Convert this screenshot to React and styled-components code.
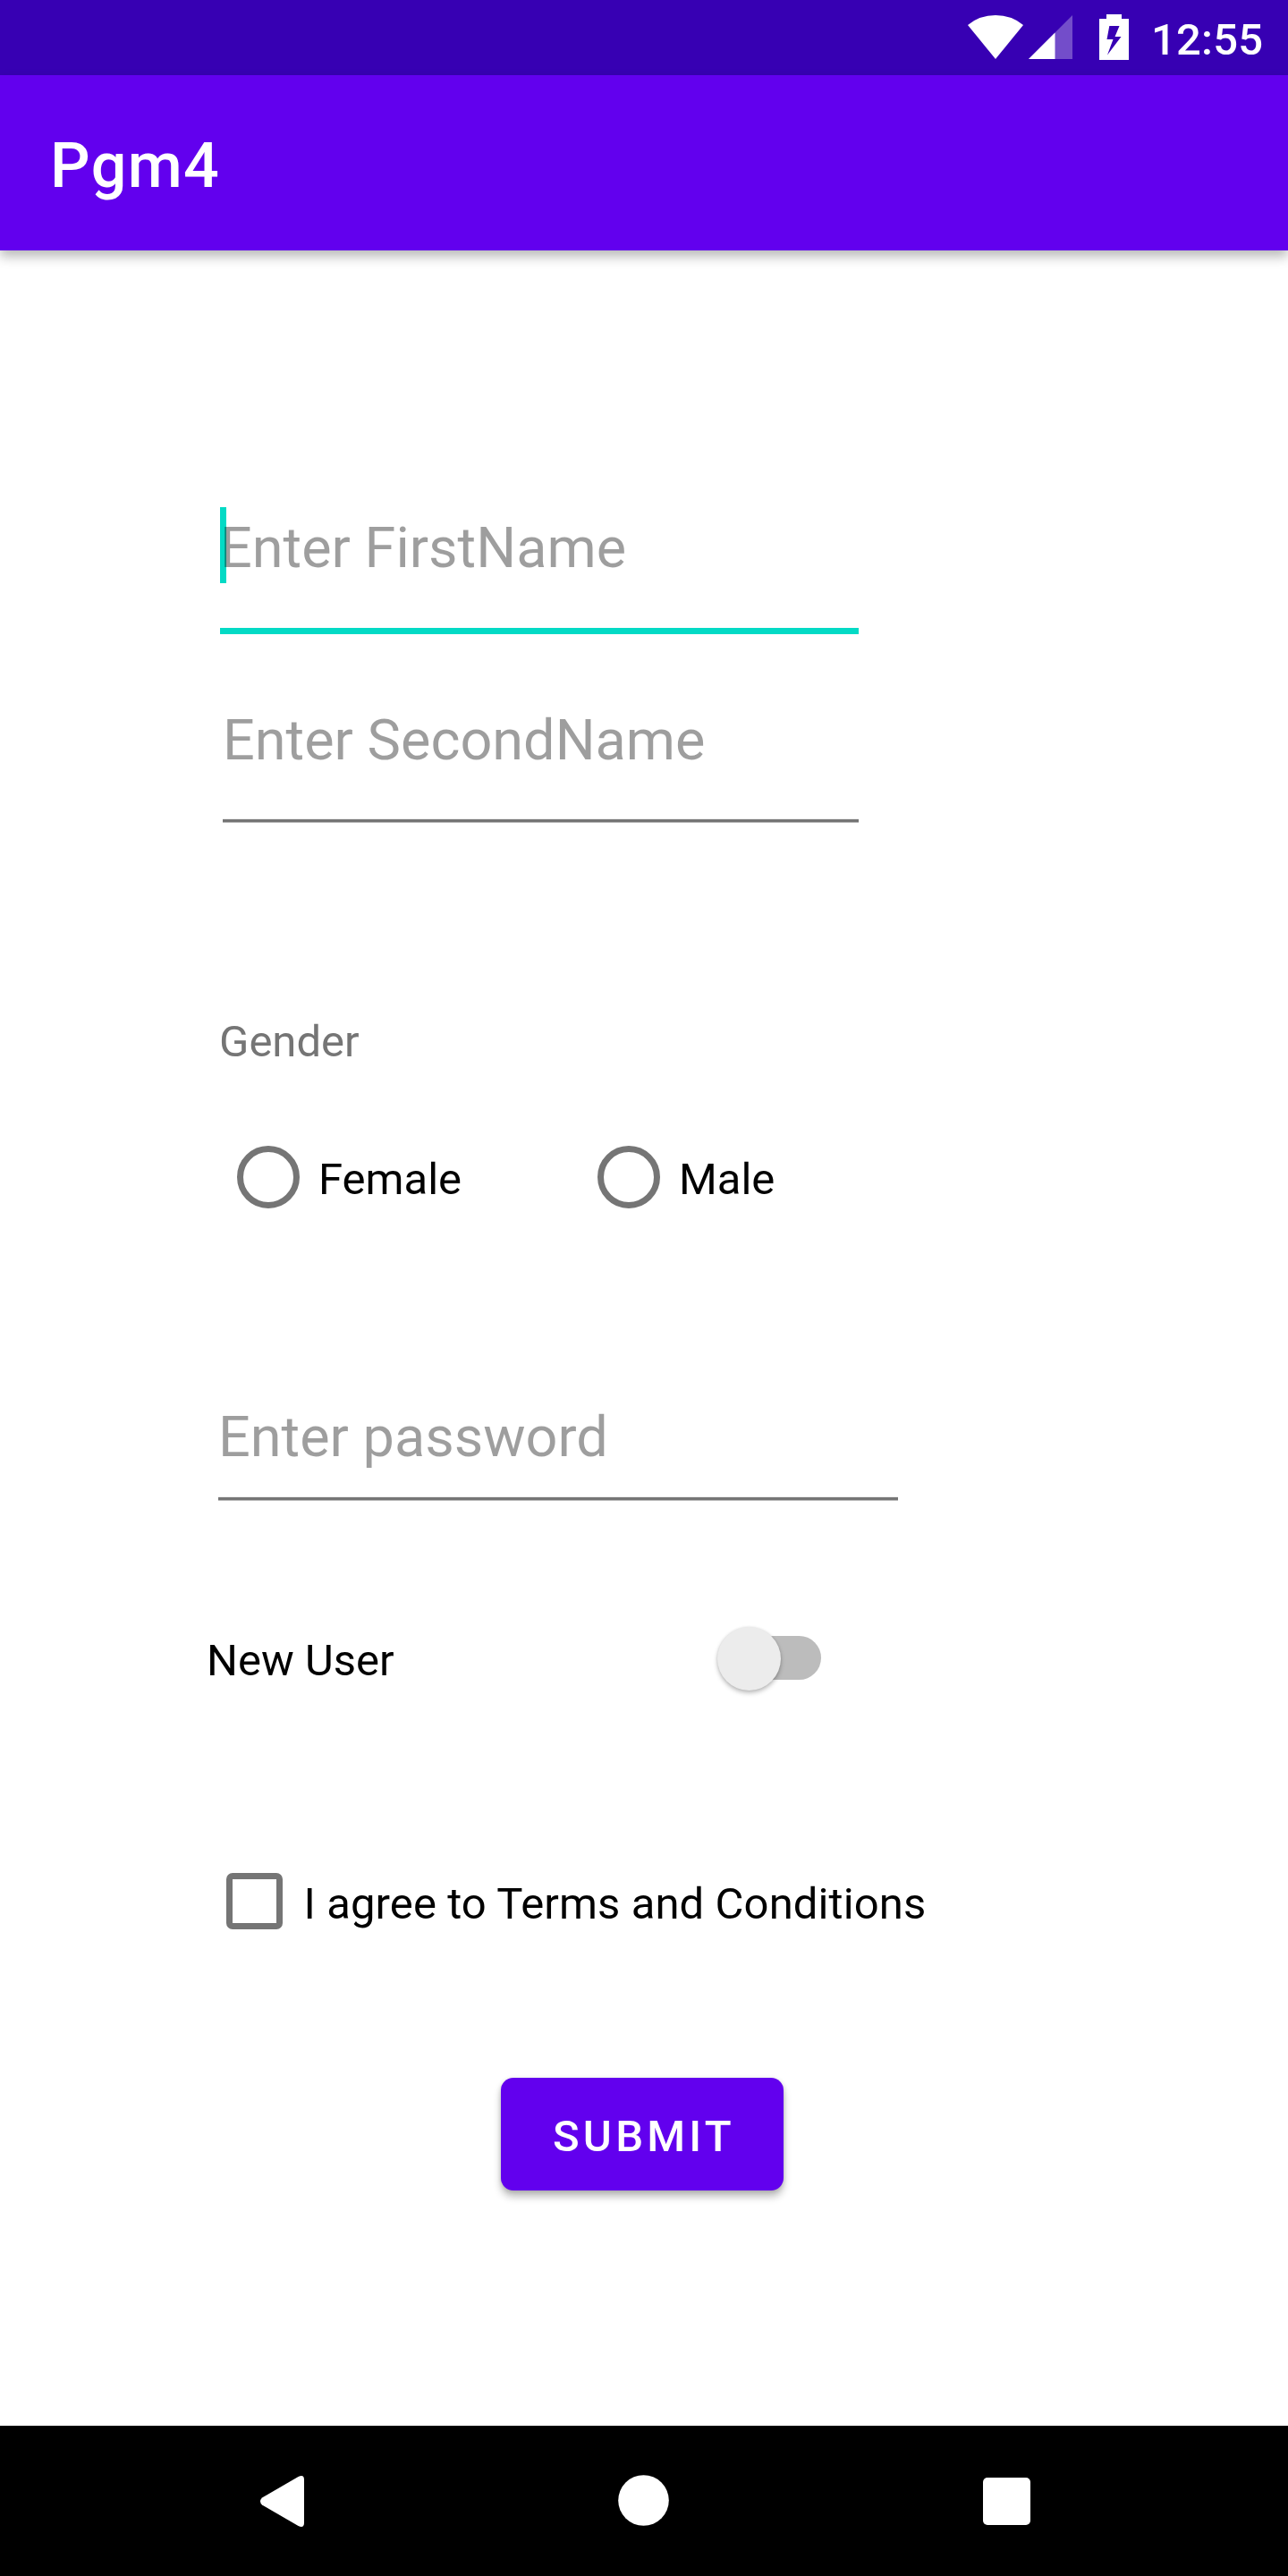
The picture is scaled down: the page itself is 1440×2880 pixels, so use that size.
import React from "react";
import styled, { createGlobalStyle } from "styled-components";

const GlobalStyle = createGlobalStyle`
  body {
    margin: 0;
    background: #fff;
  }
`;

const Screen = styled.div`
  display: flex;
  flex-direction: column;
  width: 1440px;
  height: 2880px;
  background: #fff;
  font-family: Roboto, "Liberation Sans", sans-serif;
  font-size: 49px;
  color: #000;
  overflow: hidden;
`;

const StatusBar = styled.header`
  display: flex;
  justify-content: flex-end;
  flex: none;
  height: 84px;
  box-sizing: border-box;
  padding-right: 27px;
  background: #3700b3;
`;

const StatusIcons = styled.svg`
  width: 184px;
  height: 84px;
  margin-right: 24px;
`;

const Clock = styled.time`
  width: 126px;
  color: #fff;
  font-weight: 500;
  line-height: 89px;
  letter-spacing: 0.2px;
  white-space: nowrap;
`;

const AppBar = styled.div`
  flex: none;
  height: 196px;
  box-sizing: border-box;
  padding-left: 56px;
  background: #6200ee;
  box-shadow: 0 7px 12px rgba(0, 0, 0, 0.27);
`;

const Title = styled.h1`
  margin: 0;
  color: #fff;
  font-size: 70px;
  font-weight: 500;
  line-height: 202px;
  letter-spacing: 1.4px;
`;

const Form = styled.main`
  flex: 1;
  min-height: 0;
  display: flex;
  flex-direction: column;
  align-items: flex-start;
`;

const Field = styled.div`
  position: relative;
  display: flex;
  flex-direction: column;
  justify-content: space-between;
  width: ${(p) => p.$width}px;
  height: ${(p) => p.$height}px;
  margin: ${(p) => p.$top}px 0 0 ${(p) => p.$left}px;
`;

const Hint = styled.span`
  position: relative;
  color: rgba(0, 0, 0, 0.38);
  font-size: 63px;
  line-height: 91px;
  white-space: nowrap;
`;

const Caret = styled.i`
  position: absolute;
  left: 0;
  top: 0;
  width: 7px;
  height: 85px;
  background: #03dac5;
`;

const Underline = styled.div`
  height: ${(p) => (p.$active ? 7 : 5)}px;
  background: ${(p) =>
    p.$active
      ? "#03dac5"
      : "linear-gradient(#ececec 1px, #757575 1px, #757575 4px, #bababa 4px)"};
`;

const GroupLabel = styled.div`
  margin: 215px 0 0 245px;
  color: #757575;
  line-height: 60px;
`;

const Row = styled.div`
  display: flex;
  align-items: flex-start;
  height: ${(p) => p.$height}px;
  margin: ${(p) => p.$top}px 0 0 ${(p) => p.$left}px;
`;

const Option = styled.label`
  display: flex;
  align-items: flex-start;
  width: ${(p) => (p.$width ? `${p.$width}px` : "auto")};
`;

const OptionText = styled.span`
  margin-left: ${(p) => p.$gap || 0}px;
  line-height: ${(p) => p.$line || 75}px;
  letter-spacing: ${(p) => p.$tracking || 0}px;
  white-space: nowrap;
`;

const RadioRing = styled.span`
  box-sizing: border-box;
  width: 70px;
  height: 70px;
  border: 7px solid #757575;
  border-radius: 50%;
`;

const CheckSquare = styled.span`
  box-sizing: border-box;
  width: 63px;
  height: 63px;
  border: 7px solid #757575;
  border-radius: 7px;
`;

const Switch = styled.span`
  display: flex;
  align-items: center;
  box-sizing: border-box;
  width: 112px;
  height: 49px;
  margin: 10px 0 0 366px;
  border-radius: 25px;
  background: #bcbcbc;
`;

const Thumb = styled.span`
  flex: none;
  width: 71px;
  height: 71px;
  margin: 2px 0 0 -4px;
  border-radius: 50%;
  background: #ececec;
  box-shadow: 0 3px 5px rgba(0, 0, 0, 0.25), 0 0 3px rgba(0, 0, 0, 0.1);
`;

const SubmitButton = styled.button`
  width: 316px;
  height: 126px;
  margin: 166px 0 0 560px;
  padding: 4px 0 0 58px;
  border: 0;
  border-radius: 14px;
  background: #6200ee;
  box-shadow: 0 7px 9px rgba(0, 0, 0, 0.25), 0 1px 5px rgba(0, 0, 0, 0.15);
  color: #fff;
  font: 500 49px Roboto, "Liberation Sans", sans-serif;
  letter-spacing: 4.2px;
  text-align: left;
`;

const NavBar = styled.nav`
  flex: none;
  height: 168px;
  background: #000;
`;

const NavIcons = styled.svg`
  display: block;
  width: 1440px;
  height: 168px;
`;

export default function App() {
  return (
    <Screen>
      <GlobalStyle />
      <StatusBar>
        <StatusIcons viewBox="1079 0 184 84" fill="#fff">
          <path d="M1082 28Q1095 17 1113 17T1144 28L1113 66Z" />
          <path d="M1199 17V66H1150Z" opacity="0.3" />
          <path d="M1179.5 36.5V66H1150Z" />
          <path
            fillRule="evenodd"
            d="M1237 16H1254V21H1262V67H1229V21H1237ZM1240.3 29L1237.5 44H1244.5L1238 61.5L1253.5 41H1246.5L1251.5 29Z"
          />
        </StatusIcons>
        <Clock>12:55</Clock>
      </StatusBar>
      <AppBar>
        <Title>Pgm4</Title>
      </AppBar>
      <Form>
        <Field $left={246} $top={287} $width={714} $height={142}>
          <Caret />
          <Hint>Enter FirstName</Hint>
          <Underline $active />
        </Field>
        <Field $left={249} $top={73} $width={711} $height={138}>
          <Hint>Enter SecondName</Hint>
          <Underline />
        </Field>
        <GroupLabel>Gender</GroupLabel>
        <Row $left={265} $top={86} $height={70}>
          <Option $width={403}>
            <RadioRing />
            <OptionText $gap={21}>Female</OptionText>
          </Option>
          <Option>
            <RadioRing />
            <OptionText $gap={21}>Male</OptionText>
          </Option>
        </Row>
        <Field $left={244} $top={210} $width={760} $height={117}>
          <Hint>Enter password</Hint>
          <Underline />
        </Field>
        <Row $left={231} $top={141} $height={71}>
          <Option $width={209}>
            <OptionText>New User</OptionText>
          </Option>
          <Switch>
            <Thumb />
          </Switch>
        </Row>
        <Row $left={252.5} $top={204} $height={63}>
          <Option>
            <CheckSquare />
            <OptionText $gap={24} $line={69} $tracking={0.1}>
              I agree to Terms and Conditions
            </OptionText>
          </Option>
        </Row>
        <SubmitButton type="button">SUBMIT</SubmitButton>
      </Form>
      <NavBar>
        <NavIcons viewBox="0 2712 1440 168" fill="#fff">
          <path d="M333.500 2769Q340 2766 340 2772.500V2820.500Q340 2827 333.500 2824L293 2800.500Q289 2796.500 293 2792.500Z" />
          <circle cx="719.500" cy="2795.500" r="28.300" />
          <rect x="1099" y="2770" width="53" height="53" rx="5" />
        </NavIcons>
      </NavBar>
    </Screen>
  );
}
